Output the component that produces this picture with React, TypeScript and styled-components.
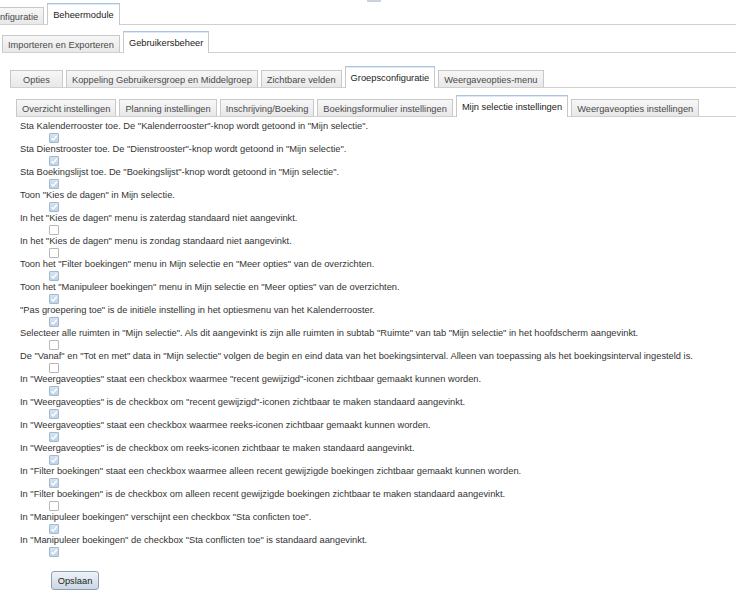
import React from 'react'
import styled, { createGlobalStyle } from 'styled-components'

const GlobalStyle = createGlobalStyle`
  html, body {
    margin: 0;
    padding: 0;
    background: #ffffff;
    overflow: hidden;
  }
  body {
    font-family: 'Liberation Sans', Arial, sans-serif;
    font-size: 9.3px;
    color: #333333;
  }
`

type TabDef = { label: string; active?: boolean; wide?: boolean }

const level1: TabDef[] = [{ label: 'Configuratie' }, { label: 'Beheermodule', active: true }]
const level2: TabDef[] = [
  { label: 'Importeren en Exporteren' },
  { label: 'Gebruikersbeheer', active: true },
]
const level3: TabDef[] = [
  { label: 'Opties', wide: true },
  { label: 'Koppeling Gebruikersgroep en Middelgroep' },
  { label: 'Zichtbare velden' },
  { label: 'Groepsconfiguratie', active: true },
  { label: 'Weergaveopties-menu' },
]
const level4: TabDef[] = [
  { label: 'Overzicht instellingen' },
  { label: 'Planning instellingen' },
  { label: 'Inschrijving/Boeking' },
  { label: 'Boekingsformulier instellingen' },
  { label: 'Mijn selectie instellingen', active: true },
  { label: 'Weergaveopties instellingen' },
]

const settings: { text: string; checked: boolean }[] = [
  { text: 'Sta Kalenderrooster toe. De "Kalenderrooster"-knop wordt getoond in "Mijn selectie".', checked: true },
  { text: 'Sta Dienstrooster toe. De "Dienstrooster"-knop wordt getoond in "Mijn selectie".', checked: true },
  { text: 'Sta Boekingslijst toe. De "Boekingslijst"-knop wordt getoond in "Mijn selectie".', checked: true },
  { text: 'Toon "Kies de dagen" in Mijn selectie.', checked: true },
  { text: 'In het "Kies de dagen" menu is zaterdag standaard niet aangevinkt.', checked: false },
  { text: 'In het "Kies de dagen" menu is zondag standaard niet aangevinkt.', checked: false },
  { text: 'Toon het "Filter boekingen" menu in Mijn selectie en "Meer opties" van de overzichten.', checked: true },
  { text: 'Toon het "Manipuleer boekingen" menu in Mijn selectie en "Meer opties" van de overzichten.', checked: true },
  { text: '"Pas groepering toe" is de initiële instelling in het optiesmenu van het Kalenderrooster.', checked: true },
  {
    text: 'Selecteer alle ruimten in "Mijn selectie". Als dit aangevinkt is zijn alle ruimten in subtab "Ruimte" van tab "Mijn selectie" in het hoofdscherm aangevinkt.',
    checked: false,
  },
  {
    text: 'De "Vanaf" en "Tot en met" data in "Mijn selectie" volgen de begin en eind data van het boekingsinterval. Alleen van toepassing als het boekingsinterval ingesteld is.',
    checked: false,
  },
  { text: 'In "Weergaveopties" staat een checkbox waarmee "recent gewijzigd"-iconen zichtbaar gemaakt kunnen worden.', checked: true },
  { text: 'In "Weergaveopties" is de checkbox om "recent gewijzigd"-iconen zichtbaar te maken standaard aangevinkt.', checked: true },
  { text: 'In "Weergaveopties" staat een checkbox waarmee reeks-iconen zichtbaar gemaakt kunnen worden.', checked: true },
  { text: 'In "Weergaveopties" is de checkbox om reeks-iconen zichtbaar te maken standaard aangevinkt.', checked: true },
  {
    text: 'In "Filter boekingen" staat een checkbox waarmee alleen recent gewijzigde boekingen zichtbaar gemaakt kunnen worden.',
    checked: true,
  },
  {
    text: 'In "Filter boekingen" is de checkbox om alleen recent gewijzigde boekingen zichtbaar te maken standaard aangevinkt.',
    checked: false,
  },
  { text: 'In "Manipuleer boekingen" verschijnt een checkbox "Sta conficten toe".', checked: true },
  { text: 'In "Manipuleer boekingen" de checkbox "Sta conflicten toe" is standaard aangevinkt.', checked: true },
]

function TabRow({ tabs, offset, top }: { tabs: TabDef[]; offset: number; top: number }) {
  return (
    <TabBar $offset={offset} $top={top}>
      {tabs.map((t) => (
        <Tab key={t.label} $active={!!t.active} $wide={!!t.wide}>
          {t.label}
        </Tab>
      ))}
    </TabBar>
  )
}

function CheckMark() {
  return (
    <svg width="8" height="8" viewBox="0 0 8 8">
      <path d="M1.3 4.2 L3.2 6 L6.8 1.8" fill="none" stroke="#ffffff" strokeWidth="1.4" />
    </svg>
  )
}

export default function App() {
  return (
    <>
      <GlobalStyle />
      <Page>
        <ScrollMark />
        <TabRow tabs={level1} offset={-18} top={3} />
        <TabRow tabs={level2} offset={2} top={6} />
        <TabRow tabs={level3} offset={10} top={13} />
        <TabRow tabs={level4} offset={16} top={7} />
        <Content>
          {settings.map((s) => (
            <Setting key={s.text}>
              <SettingLabel>{s.text}</SettingLabel>
              <Box $checked={s.checked}>{s.checked && <CheckMark />}</Box>
            </Setting>
          ))}
          <SaveButton>Opslaan</SaveButton>
        </Content>
      </Page>
    </>
  )
}

const Page = styled.div`
  position: relative;
  width: 736px;
  height: 599px;
  overflow: hidden;
`

const ScrollMark = styled.div`
  position: absolute;
  top: 0;
  left: 367px;
  width: 14px;
  height: 2px;
  background: #c9d2de;
`

const TabBar = styled.div<{ $offset: number; $top: number }>`
  display: flex;
  align-items: flex-end;
  gap: 3px;
  margin-left: ${(p) => p.$offset}px;
  margin-top: ${(p) => p.$top}px;
  height: 21px;
  border-bottom: 1px solid #d0d0d0;
`

const Tab = styled.div<{ $active: boolean; $wide: boolean }>`
  box-sizing: border-box;
  display: flex;
  align-items: center;
  justify-content: center;
  white-space: nowrap;
  padding: 0 5px;
  min-width: ${(p) => (p.$wide ? '53px' : '0')};
  border: 1px solid #c8c8c8;
  border-bottom: none;
  height: ${(p) => (p.$active ? '22px' : '17px')};
  margin-bottom: ${(p) => (p.$active ? '-1px' : '0')};
  padding-top: ${(p) => (p.$active ? '0' : '1px')};
  background: ${(p) => (p.$active ? '#ffffff' : 'linear-gradient(#f7f7f7, #e8e8e8)')};
  border-top-color: ${(p) => (p.$active ? '#a9c5e2' : '#c8c8c8')};
  box-shadow: ${(p) => (p.$active ? 'inset 0 1px 0 #dce9f6' : 'none')};
  color: ${(p) => (p.$active ? '#222222' : '#4a4a4a')};
  position: relative;
  z-index: ${(p) => (p.$active ? 1 : 0)};
`

const Content = styled.div`
  padding: 3px 0 0 20px;
`

const Setting = styled.div`
  display: flex;
  flex-direction: column;
  align-items: flex-start;
`

const SettingLabel = styled.div`
  line-height: 13px;
  white-space: nowrap;
  color: #333333;
`

const Box = styled.span<{ $checked: boolean }>`
  box-sizing: border-box;
  display: flex;
  align-items: center;
  justify-content: center;
  width: 10px;
  height: 10px;
  margin-left: 29px;
  border: 1px solid ${(p) => (p.$checked ? '#a3b9cf' : '#b8b8b8')};
  border-radius: 1px;
  background: ${(p) => (p.$checked ? 'linear-gradient(#d5e3f1, #bfd2e6)' : '#ffffff')};
`

const SaveButton = styled.button`
  display: block;
  box-sizing: border-box;
  margin: 14px 0 0 31px;
  width: 48px;
  height: 19px;
  padding: 0;
  font-family: 'Liberation Sans', Arial, sans-serif;
  font-size: 9.3px;
  color: #222222;
  border: 1px solid #8e9eb3;
  border-radius: 3px;
  background: linear-gradient(#eef3f8, #cbd7e4);
`
